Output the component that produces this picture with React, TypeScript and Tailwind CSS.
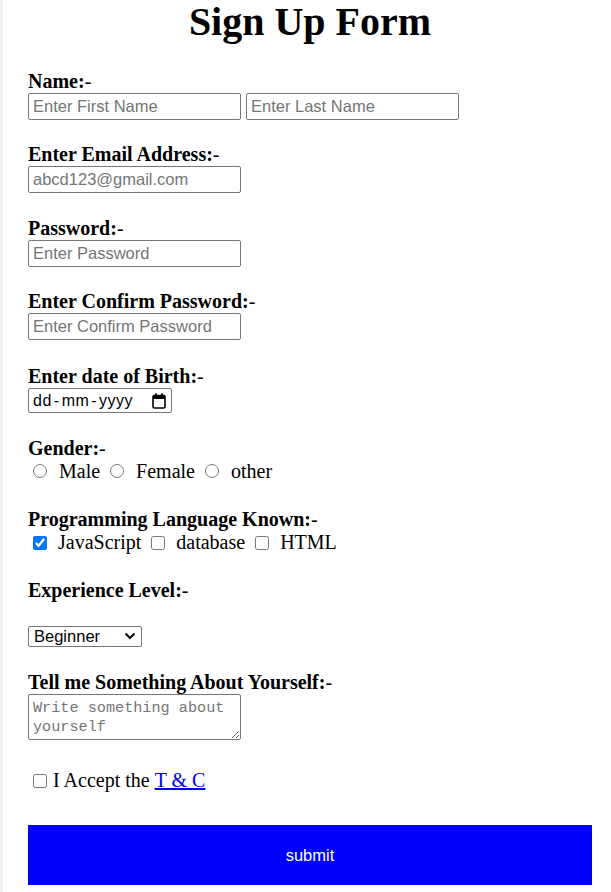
import React, { useState } from "react";

const serif = "font-['Liberation_Serif','Times_New_Roman',serif]";
const sans = "font-['Liberation_Sans',Arial,sans-serif]";

const textInput =
  "block h-[27px] w-[213px] rounded-[2px] border border-[#767676] bg-white px-[4px] text-[16.5px] text-black placeholder:text-[#757575] outline-none " +
  sans;

const Label = ({ title, className = "" }: { title: string; className?: string }) => (
  <div className={"h-[23px] text-[20px] font-normal leading-[23px] " + className}>
    <b>{title}</b>-
  </div>
);

const CalendarIcon = () => (
  <svg width="14" height="16" viewBox="0 0 14 16" aria-hidden="true">
    <rect x="3" y="0.5" width="2" height="3" fill="#000" />
    <rect x="9" y="0.5" width="2" height="3" fill="#000" />
    <rect x="1" y="2.5" width="12" height="12.5" rx="1.5" fill="none" stroke="#000" strokeWidth="1.6" />
    <rect x="1" y="2.5" width="12" height="3.5" fill="#000" />
  </svg>
);

const Chevron = () => (
  <svg width="12" height="8" viewBox="0 0 12 8" aria-hidden="true">
    <path d="M1.5 1.5 L6 6 L10.5 1.5" fill="none" stroke="#000" strokeWidth="2" />
  </svg>
);

export default function App() {
  const [gender, setGender] = useState("");
  const [langs, setLangs] = useState<string[]>(["JavaScript"]);
  const [accepted, setAccepted] = useState(false);

  const toggleLang = (name: string) => {
    setLangs(langs.includes(name) ? langs.filter((l) => l !== name) : [...langs, name]);
  };

  return (
    <div className={"min-h-[892px] border-l-[3px] border-[#f1f1f1] bg-white text-black " + serif}>
      <form
        className="flex flex-col pl-[25px] pr-[19px]"
        onSubmit={(e) => e.preventDefault()}
      >
        <h1 className="mt-[-1px] text-center text-[40px] font-bold leading-[46px]">Sign Up Form</h1>

        {/* name */}
        <Label title="Name:" className="mt-[25px]" />
        <div className="flex gap-[5px]">
          <input type="text" placeholder="Enter First Name" className={textInput} />
          <input type="text" placeholder="Enter Last Name" className={textInput} />
        </div>

        <Label title="Enter Email Address:" className="mt-[23px]" />
        <input type="email" placeholder="abcd123@gmail.com" className={textInput} />

        <Label title="Password:" className="mt-[24px]" />
        <input type="password" placeholder="Enter Password" className={textInput} />

        <Label title="Enter Confirm Password:" className="mt-[23px]" />
        <input type="password" placeholder="Enter Confirm Password" className={textInput} />

        <Label title="Enter date of Birth:" className="mt-[25px]" />
        <div
          className={
            "flex h-[25px] w-[144px] items-center justify-between rounded-[2px] border border-[#767676] pl-[4px] pr-[5px] text-[16px] " +
            sans
          }
        >
          <span className="tracking-[0.5px]">
            dd<span className="px-[2px]">-</span>mm<span className="px-[2px]">-</span>yyyy
          </span>
          <CalendarIcon />
        </div>

        {/* gender */}
        <Label title="Gender:" className="mt-[24px]" />
        <div className="flex h-[23px] items-center text-[20px] leading-[23px]">
          {["Male", "Female", "other"].map((g, i) => (
            <label key={g} className="flex items-center">
              <input
                type="radio"
                name="gender"
                checked={gender === g}
                onChange={() => setGender(g)}
                className={"mb-[2px] mr-[12px] h-[14px] w-[14px] " + (i === 0 ? "ml-[5px]" : "ml-[10px]")}
              />
              {g}
            </label>
          ))}
        </div>

        {/* languages */}
        <Label title="Programming Language Known:" className="mt-[25px]" />
        <div className="flex h-[23px] items-center text-[20px] leading-[23px]">
          {["JavaScript", "database", "HTML"].map((l, i) => (
            <label key={l} className="flex items-center">
              <input
                type="checkbox"
                checked={langs.includes(l)}
                onChange={() => toggleLang(l)}
                className={"mr-[11px] h-[14px] w-[14px] " + (i === 0 ? "ml-[5px]" : "ml-[10px]")}
              />
              {l}
            </label>
          ))}
        </div>

        <Label title="Experience Level:" className="mt-[25px]" />
        <div className="relative mt-[24px] w-[114px]">
          <select
            defaultValue="Beginner"
            className={
              "block h-[21px] w-[114px] appearance-none rounded-[2px] border border-[#767676] bg-white pl-[5px] text-[16.5px] leading-[19px] outline-none " +
              sans
            }
          >
            <option>Beginner</option>
            <option>Intermediate</option>
            <option>Advanced</option>
          </select>
          <span className="pointer-events-none absolute right-[6px] top-[6px] flex">
            <Chevron />
          </span>
        </div>

        <Label title="Tell me Something About Yourself:" className="mt-[24px]" />
        <textarea
          rows={2}
          placeholder="Write something about yourself"
          className="block h-[46px] w-[213px] resize rounded-[2px] border border-[#767676] px-[4px] pt-[4px] font-['Liberation_Mono','Courier_New',monospace] text-[15.2px] leading-[19px] outline-none placeholder:text-[#757575]"
        />

        <label className="mt-[29px] flex h-[23px] items-center text-[20px] leading-[23px]">
          <input
            type="checkbox"
            checked={accepted}
            onChange={() => setAccepted(!accepted)}
            className="ml-[5px] mr-[6px] h-[14px] w-[14px]"
          />
          I Accept the&nbsp;
          <a href="#" className="text-[#0000ee] underline">
            T &amp; C
          </a>
        </label>

        <button
          type="submit"
          className={"mt-[33px] h-[60px] w-full bg-[#0000ff] text-[16.5px] text-white " + sans}
        >
          submit
        </button>
      </form>
    </div>
  );
}
